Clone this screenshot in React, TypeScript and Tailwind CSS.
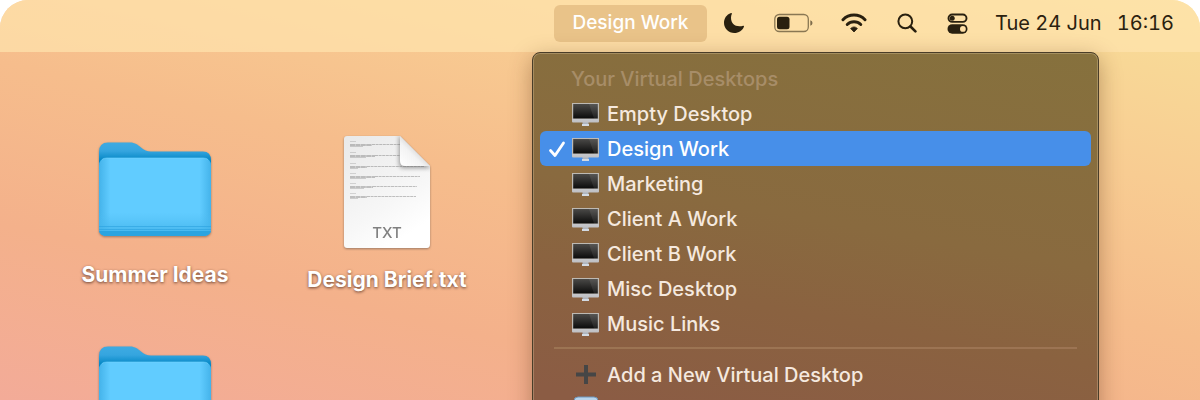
import { useState } from "react";

const desktops = [
  "Empty Desktop",
  "Design Work",
  "Marketing",
  "Client A Work",
  "Client B Work",
  "Misc Desktop",
  "Music Links",
];

function MonitorIcon() {
  return (
    <svg viewBox="0 0 27 24" className="h-6 w-[27px] shrink-0" aria-hidden="true">
      <defs>
        <linearGradient id="screen" x1="0" y1="0" x2="0" y2="1">
          <stop offset="0" stopColor="#4a4947" />
          <stop offset="1" stopColor="#0b0b0b" />
        </linearGradient>
        <linearGradient id="chin" x1="0" y1="0" x2="0" y2="1">
          <stop offset="0" stopColor="#e4e4e6" />
          <stop offset="1" stopColor="#bfc0c4" />
        </linearGradient>
      </defs>
      <path d="M10.500 19h6v4h-6z" fill="#aeb4bd" />
      <path d="M10 22h7v2h-7z" fill="#d3dae3" />
      <rect y="1" width="27" height="19.500" rx="1" fill="url(#chin)" />
      <rect y="1" width="27" height="16" rx=".6" fill="#bdb9b3" />
      <rect x="1.200" y="2" width="24.600" height="14.500" fill="url(#screen)" />
      <path d="M17 2h8.800v14.500H22z" fill="#fff" opacity=".08" />
    </svg>
  );
}

function CheckIcon() {
  return (
    <svg viewBox="0 0 20 20" className="size-5" fill="none" aria-hidden="true">
      <path
        d="M2.500 11.500 7 16.500 15.500 4"
        stroke="white"
        strokeWidth="2.800"
        strokeLinecap="round"
        strokeLinejoin="round"
      />
    </svg>
  );
}

function FolderIcon() {
  return (
    <svg viewBox="0 0 114 98" className="h-[98px] w-[114px] drop-shadow-[0_1px_1px_rgba(70,60,60,0.5)]" aria-hidden="true">
      <defs>
        <linearGradient id="folderBack" x1="0" y1="0" x2="0" y2="18" gradientUnits="userSpaceOnUse">
          <stop offset="0" stopColor="#3fabe2" />
          <stop offset=".5" stopColor="#35a5df" />
          <stop offset="1" stopColor="#0588c6" />
        </linearGradient>
        <linearGradient id="folderFront" x1="0" y1="0" x2="1" y2="0">
          <stop offset="0" stopColor="#44b3ea" />
          <stop offset=".1" stopColor="#61ccff" />
          <stop offset=".9" stopColor="#61ccff" />
          <stop offset="1" stopColor="#44b3ea" />
        </linearGradient>
        <linearGradient id="folderBase" x1="0" y1="0" x2="0" y2="1">
          <stop offset="0" stopColor="#50bdf2" stopOpacity="0" />
          <stop offset="1" stopColor="#3fb2ea" />
        </linearGradient>
      </defs>
      <path d="M1 10q0-9.500 9-9.500h22c5 0 8 2.500 11 5s6 4 10 4h52q8 0 8 9v12H1z" fill="url(#folderBack)" />
      <path d="M1 24q0-8 8-8h96q8 0 8 8v62q0 8-8 8H9q-8 0-8-8z" fill="url(#folderFront)" />
      <path d="M4 17.500q2-1.500 5-1.500h96q3 0 5 1.500" stroke="#7ad5ff" fill="none" opacity=".6" />
      <path d="M1 70h112v16q0 8-8 8H9q-8 0-8-8z" fill="url(#folderBase)" />
      <path d="M1 84.500h112M1 87.500h112" stroke="#2ba2e0" opacity=".6" />
      <path d="M1 89h112q-1 5-8 5H9q-7 0-8-5z" fill="#2ba4e0" />
    </svg>
  );
}

function TextFileIcon() {
  const lines = [
    { y: 9, w: 23, rest: 52 },
    { y: 20, w: 26, rest: 52 },
    { y: 31, w: 18, rest: 76 },
    { y: 41, w: 26, rest: 72 },
    { y: 51, w: 24, rest: 69 },
    { y: 61, w: 18, rest: 68 },
  ];

  return (
    <svg viewBox="0 0 88 114" className="h-[114px] w-[88px] drop-shadow-[0_1px_1px_rgba(70,60,60,0.5)]" aria-hidden="true">
      <defs>
        <linearGradient id="paper" x1="0" y1="0" x2=".5" y2="1">
          <stop offset="0" stopColor="#e9e9e9" />
          <stop offset=".7" stopColor="#f7f7f7" />
          <stop offset="1" stopColor="#fff" />
        </linearGradient>
        <linearGradient id="fold" x1="0" y1="1" x2=".6" y2=".4">
          <stop offset="0" stopColor="#fff" />
          <stop offset=".65" stopColor="#f3f3f3" />
          <stop offset="1" stopColor="#d4d4d4" />
        </linearGradient>
        <filter id="soft" x="-30%" y="-30%" width="160%" height="160%">
          <feGaussianBlur stdDeviation="2.200" />
        </filter>
        <clipPath id="sheet">
          <path d="M4 1h53l30 30v78q0 4-3 4H4q-3 0-3-3V4q0-3 3-3z" />
        </clipPath>
      </defs>
      <path d="M4 1h53l30 30v78q0 4-3 4H4q-3 0-3-3V4q0-3 3-3z" fill="url(#paper)" />
      {lines.map(({ y, w, rest }) => (
        <g key={y} stroke="#555" fill="none">
          <path d={`M7 ${y - 2.5}h6`} strokeWidth=".5" opacity=".4" />
          <path d={`M7 ${y + 1}H${w + 6}`} strokeWidth="1" strokeDasharray="5 .4" opacity=".65" />
          <path d={`M${w + 6} ${y + 0.5}H${rest + 5}`} strokeWidth=".7" strokeDasharray="3 .6" opacity=".5" />
          <path d={`M7 ${y + 2.5}h${w - 10}`} strokeWidth=".8" opacity=".3" />
        </g>
      ))}
      <g clipPath="url(#sheet)">
        <path d="M56 0v28q0 5 5 5h27" fill="#666" opacity=".65" filter="url(#soft)" />
      </g>
      <path d="M57 1v25q0 5 5 5h25z" fill="url(#fold)" />
      <text x="44" y="103" textAnchor="middle" fontSize="15" fontWeight="500" fontFamily="Inter, sans-serif" fill="#808080">
        TXT
      </text>
    </svg>
  );
}

function MoonIcon() {
  return (
    <svg viewBox="0 0 22 22" className="size-[22px]" aria-hidden="true">
      <path d="M8 1C3.500 2.600 1 6.400 1 10.800 1 16.700 5.600 21 11.300 21c4.500 0 8.300-2.500 9.700-6.500.2-.7-.3-1-.9-.8-1.100.4-2.300.6-3.600.6C11.300 14.300 8 11 8 5.800c0-1.500.3-2.700.8-3.900.2-.6-.2-1.100-.8-.9z" fill="#29200f" />
    </svg>
  );
}

function BatteryIcon() {
  return (
    <svg viewBox="0 0 39 20" className="h-5 w-[39px]" aria-hidden="true">
      <rect x=".8" y="1.500" width="33.500" height="17" rx="4.500" fill="none" stroke="#29200f" strokeOpacity=".55" strokeWidth="1.300" />
      <rect x="3" y="3.700" width="12.500" height="12.500" rx="2.500" fill="#29200f" />
      <path d="M36.300 7.200q2.200.7 2.200 2.800t-2.200 2.800z" fill="#29200f" opacity=".6" />
    </svg>
  );
}

function WifiIcon() {
  return (
    <svg viewBox="0 0 26 20" className="h-5 w-[26px]" fill="none" stroke="#29200f" aria-hidden="true">
      <path d="M2 6.700a15.500 15.500 0 0 1 22 0" strokeWidth="3" strokeLinecap="round" />
      <path d="M6.200 11.500a9.600 9.600 0 0 1 13.600 0" strokeWidth="2.900" strokeLinecap="round" />
      <path d="M13 19l3.400-3.500a5 5 0 0 0-6.800 0z" fill="#29200f" strokeWidth=".8" strokeLinejoin="round" />
    </svg>
  );
}

function SearchIcon() {
  return (
    <svg viewBox="0 0 20 20" className="size-5" fill="none" stroke="#29200f" strokeLinecap="round" aria-hidden="true">
      <circle cx="8.300" cy="8.300" r="6.900" strokeWidth="2" />
      <path d="M13.500 13.500l4.900 4.900" strokeWidth="2.600" />
    </svg>
  );
}

function ControlCenterIcon() {
  return (
    <svg viewBox="0 0 21 21" className="size-[21px]" aria-hidden="true">
      <rect x="1.500" y="1.500" width="18" height="7.400" rx="3.700" fill="none" stroke="#29200f" strokeWidth="1.900" />
      <circle cx="5.200" cy="5.200" r="2.500" fill="#29200f" />
      <rect x=".5" y="11.200" width="20" height="9.500" rx="4.700" fill="#29200f" />
      <circle cx="15.900" cy="15.950" r="2.900" fill="#ffdfa6" />
    </svg>
  );
}

function DesktopMenu({ current, onSelect }: { current: string; onSelect: (name: string) => void }) {
  return (
    <div
      role="menu"
      className="absolute -left-[22px] top-[47px] z-10 w-[567px] rounded-lg border border-[#4a3d28] bg-[linear-gradient(190deg,#86713d_0%,#896a3f_45%,#8a6240_65%,#8b5c44_90%)] px-[7px] py-2 text-xl font-medium text-[#f5e9df] shadow-[inset_0_0_0_1px_rgba(255,235,200,0.25),0_6px_22px_rgba(90,50,20,0.4)]"
    >
      <div className="flex h-[35px] items-center pl-[31px] text-[#a78d68]">Your Virtual Desktops</div>
      {desktops.map((name) => (
        <button
          key={name}
          role="menuitemradio"
          aria-checked={name === current}
          onClick={() => onSelect(name)}
          className={`flex h-[35px] w-full items-center rounded-md pl-2 ${
            name === current ? "bg-[#478fe9] text-white" : ""
          }`}
        >
          <span className="mr-1 w-5">{name === current && <CheckIcon />}</span>
          <MonitorIcon />
          <span className="ml-2">{name}</span>
        </button>
      ))}
      <hr className="mx-3.5 mt-1.5 mb-2 border-t-2 border-[#9c7453]" />
      <button role="menuitem" className="flex h-[35px] w-full items-center pl-8">
        <svg viewBox="0 0 27 24" className="h-6 w-[27px]" aria-hidden="true">
          <path d="M4 11.500h20M14 2v19" stroke="#464646" strokeWidth="4" />
        </svg>
        <span className="ml-2">Add a New Virtual Desktop</span>
      </button>
      <button role="menuitem" aria-label="Settings" className="flex h-[35px] w-full items-center pl-8">
        <svg viewBox="0 0 27 28" className="h-7 w-[27px]" aria-hidden="true">
          <rect x="2" y="1" width="24" height="26" rx="4" fill="#b9d5ec" stroke="#6f98bd" />
        </svg>
      </button>
    </div>
  );
}

function MenuBar() {
  const [current, setCurrent] = useState("Design Work");

  return (
    <header className="flex h-[52px] items-start justify-end bg-[#ffe4ae]/70 pt-[5px] pr-[26px] text-xl text-[#2b210f]">
      <div className="relative mr-4">
        <button aria-haspopup="menu" className="h-[37px] w-[153px] rounded-md bg-[#e9c389] text-[19px] font-medium text-white">
          {current}
        </button>
        <DesktopMenu current={current} onSelect={setCurrent} />
      </div>
      <div className="flex h-9 items-center">
        <button aria-label="Focus" className="mr-[29px]"><MoonIcon /></button>
        <button aria-label="Battery" className="mr-7"><BatteryIcon /></button>
        <button aria-label="Wi-Fi" className="mr-[30px]"><WifiIcon /></button>
        <button aria-label="Search" className="mr-[30px]"><SearchIcon /></button>
        <button aria-label="Control Center" className="mr-[27px]"><ControlCenterIcon /></button>
        <time className="flex w-[179px] justify-between whitespace-nowrap tabular-nums">
          <span>Tue 24 Jun</span>
          <span>16:16</span>
        </time>
      </div>
    </header>
  );
}

export default function App() {
  return (
    <div className="h-screen overflow-hidden bg-white font-['Inter',sans-serif]">
      <div className="h-full overflow-hidden rounded-t-[28px] bg-[linear-gradient(193deg,#f8df99_0%,#f8cc92_28%,#f6bd8c_50%,#f4b18b_74%,#f3ab98_100%)]">
        <MenuBar />
        <main className="grid grid-cols-[232px_232px] gap-y-[51px] pt-[83px] pl-[39px] text-center text-[21px] leading-[30px] font-bold text-white">
          <div className="flex flex-col items-center gap-5 pt-[7px]">
            <FolderIcon />
            <span className="[text-shadow:0_1px_3px_rgba(60,30,20,0.75)]">Summer Ideas</span>
          </div>
          <div className="flex flex-col items-center gap-4">
            <TextFileIcon />
            <span className="[text-shadow:0_1px_3px_rgba(60,30,20,0.75)]">Design Brief.txt</span>
          </div>
          <div className="flex flex-col items-center">
            <FolderIcon />
          </div>
        </main>
      </div>
    </div>
  );
}
